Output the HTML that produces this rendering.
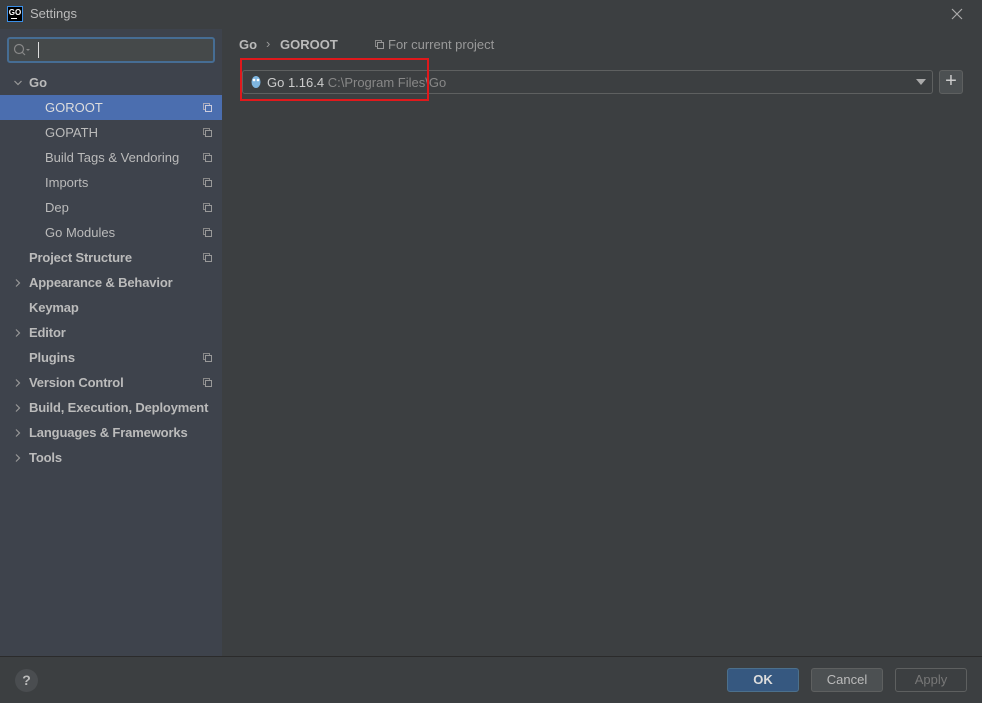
<!DOCTYPE html>
<html><head><style>
*{margin:0;padding:0;box-sizing:border-box}
body{width:982px;height:703px;background:#3c3f41;font-family:"Liberation Sans",sans-serif;font-size:13px;color:#bbbbbb;position:relative;overflow:hidden}
.abs{position:absolute}
.side{left:0;top:29px;width:222px;height:627px;background:#3e434c}
.row{position:absolute;left:0;width:222px;height:25px;line-height:25px;white-space:nowrap}
.b{font-weight:bold}
.cp{position:absolute;left:203px;top:8px;width:9px;height:9px}
.arr{position:absolute;left:14px;top:9px}
</style></head><body>
<div class="abs" style="left:7px;top:6px;width:16px;height:16px;background:#000;border:1px solid #3a8ee6;color:#fff;font-size:8px;font-weight:bold;line-height:11px;text-align:center">GO<div style="position:absolute;left:3px;top:11px;width:6px;height:1px;background:#fff"></div></div>
<div class="abs" style="left:30px;top:6px;font-size:13px;color:#bbb">Settings</div>
<svg class="abs" style="left:951px;top:8px" width="12" height="12"><path d="M1 1L11 11M11 1L1 11" stroke="#aaa" stroke-width="1.2"/></svg>
<div class="abs side"></div>
<div class="abs" style="left:7px;top:37px;width:208px;height:26px;border:2px solid #466d94;border-radius:3px;background:#45494a"></div>
<svg class="abs" style="left:13px;top:43px" width="18" height="14"><circle cx="6" cy="6" r="4.5" stroke="#888" fill="none" stroke-width="1.2"/><path d="M9 9L12 12" stroke="#888" stroke-width="1.2"/><path d="M13 6h4l-2 2z" fill="#888"/></svg>
<div class="abs" style="left:38px;top:42px;width:1px;height:16px;background:#ddd"></div>
<div class="row b" style="top:70px"><svg class="arr" width="8" height="8"><path d="M0.5 2L4 5.5L7.5 2" stroke="#999" fill="none" stroke-width="1.2"/></svg><span style="position:absolute;left:29px">Go</span></div>
<div class="row" style="top:95px;background:#4b6eaf;color:#ddd"><span style="position:absolute;left:45px">GOROOT</span><svg class="cp" viewBox="0 0 9 9"><rect x="0.5" y="0.5" width="6" height="6" fill="none" stroke="#aab" /><rect x="2.5" y="2.5" width="6" height="6" fill="#4b6eaf" stroke="#ccd"/></svg></div>
<div id="rows"></div>
<script>
var items=[["GOPATH",45,0,0,1],["Build Tags & Vendoring",45,0,0,1],["Imports",45,0,0,1],["Dep",45,0,0,1],["Go Modules",45,0,0,1],["Project Structure",29,1,0,1],["Appearance & Behavior",29,1,1,0],["Keymap",29,1,0,0],["Editor",29,1,1,0],["Plugins",29,1,0,1],["Version Control",29,1,1,1],["Build, Execution, Deployment",29,1,1,0],["Languages & Frameworks",29,1,1,0],["Tools",29,1,1,0]];
var h="";items.forEach(function(it,i){var t=120+i*25;h+='<div class="row'+(it[2]?' b':'')+'" style="top:'+t+'px">'+(it[3]?'<svg class="arr" width="8" height="8"><path d="M2 0.5L5.5 4L2 7.5" stroke="#999" fill="none" stroke-width="1.2"/></svg>':'')+'<span style="position:absolute;left:'+it[1]+'px;'+(it[2]?'letter-spacing:-0.15px':'')+'">'+it[0].replace(/&/g,'&amp;')+'</span>'+(it[4]?'<svg class="cp" viewBox="0 0 9 9"><rect x="0.5" y="0.5" width="6" height="6" fill="none" stroke="#888"/><rect x="2.5" y="2.5" width="6" height="6" fill="#3e434c" stroke="#999"/></svg>':'')+'</div>'});
document.getElementById("rows").innerHTML=h;
</script>
<div class="abs b" style="left:239px;top:37px">Go</div>
<div class="abs" style="left:266px;top:36px;color:#999">›</div>
<div class="abs b" style="left:280px;top:37px">GOROOT</div>
<svg class="abs" style="left:375px;top:40px" width="9" height="9" viewBox="0 0 9 9"><rect x="0.5" y="0.5" width="6" height="6" fill="none" stroke="#888"/><rect x="2.5" y="2.5" width="6" height="6" fill="#3c3f41" stroke="#999"/></svg>
<div class="abs" style="left:388px;top:37px;color:#999">For current project</div>
<div class="abs" style="left:242px;top:70px;width:691px;height:24px;border:1px solid #5e6060;border-radius:3px;background:#3c3f41"></div>
<svg class="abs" style="left:916px;top:79px" width="10" height="6"><path d="M0 0h10L5 6z" fill="#aaa"/></svg>
<svg class="abs" style="left:250px;top:74px" width="12" height="15"><ellipse cx="6" cy="8" rx="4.5" ry="6" fill="#7fb6e0"/><circle cx="4" cy="6" r="1.3" fill="#fff"/><circle cx="8" cy="6" r="1.3" fill="#fff"/></svg>
<div class="abs" style="left:267px;top:75px;color:#ccc">Go 1.16.4 <span style="color:#888">C:\Program Files\Go</span></div>
<div class="abs" style="left:240px;top:58px;width:189px;height:43px;border:2px solid #e0191c"></div>
<div class="abs" style="left:939px;top:70px;width:24px;height:24px;background:#4c5052;border:1px solid #5e6060;border-radius:3px;color:#ccc;font-size:20px;line-height:21px;text-align:center">+</div>
<div class="abs" style="left:0;top:656px;width:982px;height:1px;background:#2b2b2b"></div>
<div class="abs" style="left:15px;top:669px;width:23px;height:23px;border-radius:50%;background:#4a4d50;color:#bbb;font-weight:bold;font-size:14px;line-height:23px;text-align:center">?</div>
<div class="abs b" style="left:727px;top:668px;width:72px;height:24px;background:#365880;border:1px solid #4c708c;border-radius:3px;color:#ddd;text-align:center;line-height:22px">OK</div>
<div class="abs" style="left:811px;top:668px;width:72px;height:24px;background:#4c5052;border:1px solid #5e6060;border-radius:3px;color:#bbb;text-align:center;line-height:22px">Cancel</div>
<div class="abs" style="left:895px;top:668px;width:72px;height:24px;border:1px solid #5e6060;border-radius:3px;color:#777;text-align:center;line-height:22px">Apply</div>
</body></html>
